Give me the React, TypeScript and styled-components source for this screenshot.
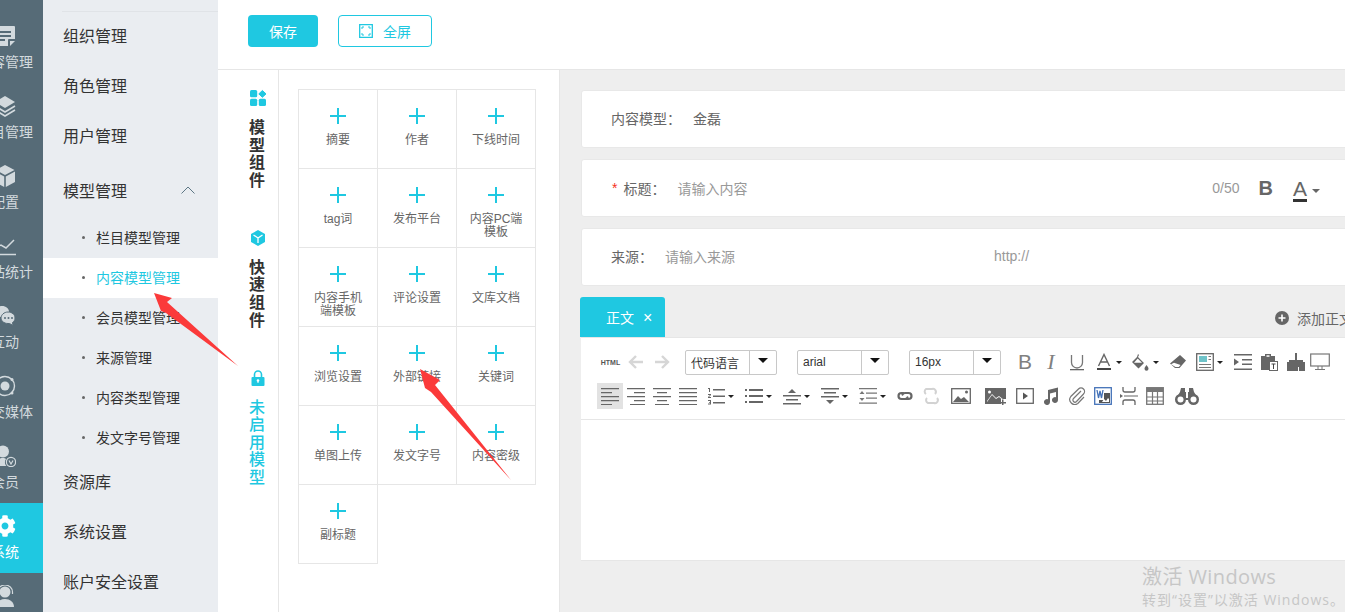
import React from 'react';
import styled, { createGlobalStyle } from 'styled-components';
import { FaCog } from 'react-icons/fa';

const CYAN = '#1fc8e1';
const LINE = '#e6e6e6';
const INK = '#666';

const Global = createGlobalStyle`
  html, body { margin: 0; padding: 0; background: #fff; overflow: hidden; }
  * { box-sizing: border-box; }
  body { font-family: "Liberation Sans", "Noto Sans CJK SC", sans-serif; color: #333; }
`;

const Page = styled.div`
  position: relative;
  display: flex;
  width: 100%;
  height: 612px;
  overflow: hidden;
`;

/* ---- icon rail ---- */
const Rail = styled.nav`
  flex: 0 0 43px;
  background: #566b77;
  overflow: hidden;
  padding-top: 13px;
`;
const RailItem = styled.div<{ $active?: boolean }>`
  width: 43px;
  height: 70px;
  background: ${p => (p.$active ? CYAN : 'transparent')};
  color: ${p => (p.$active ? '#fff' : '#d3dade')};
  overflow: hidden;
`;
const RailInner = styled.div`
  width: 86px;
  margin-left: -38px;
  display: flex;
  flex-direction: column;
  align-items: center;
  padding-top: 12px;
  svg { display: block; width: 22px; height: 22px; }
`;
const RailLabel = styled.span`
  font-size: 14px;
  line-height: 20px;
  margin-top: 5px;
  white-space: nowrap;
`;

/* ---- sub menu ---- */
const SubMenu = styled.aside`
  flex: 0 0 175px;
  background: #eaedf1;
  padding-top: 11px;
`;
const SubRule = styled.div`
  height: 1px;
  margin-left: 19px;
  background: #e0e3e7;
`;
const MenuItem = styled.div<{ $h?: number; $pad?: number }>`
  height: ${p => p.$h ?? 50}px;
  padding: 0 23px ${p => p.$pad ?? 4}px 20px;
  display: flex;
  align-items: center;
  justify-content: space-between;
  font-size: 16px;
  color: #333;
`;
const SubItem = styled.div<{ $active?: boolean }>`
  height: 40px;
  padding: 0 0 2px 39px;
  display: flex;
  align-items: center;
  font-size: 14px;
  position: relative;
  color: ${p => (p.$active ? CYAN : '#333')};
  background: ${p => (p.$active ? '#fff' : 'transparent')};
`;
const Dot = styled.i`
  width: 3px;
  height: 3px;
  background: #666;
  border-radius: 50%;
  margin-right: 11px;
`;

/* ---- main ---- */
const Main = styled.main`
  flex: 1;
  min-width: 0;
  display: flex;
  flex-direction: column;
`;
const TopBar = styled.header`
  flex: 0 0 70px;
  border-bottom: 1px solid ${LINE};
  padding: 15px 30px 0;
  display: flex;
  align-items: flex-start;
  gap: 20px;
`;
const SaveButton = styled.button`
  width: 70px;
  height: 32px;
  border: 0;
  border-radius: 4px;
  background: ${CYAN};
  color: #fff;
  font: inherit;
  font-size: 14px;
`;
const FullButton = styled.button`
  width: 94px;
  height: 32px;
  border: 1px solid ${CYAN};
  border-radius: 4px;
  background: #fff;
  color: ${CYAN};
  font: inherit;
  font-size: 14px;
  display: flex;
  align-items: center;
  padding: 0 0 0 20px;
  gap: 10px;
  svg { display: block; }
`;
const Body = styled.div`
  flex: 1;
  display: flex;
  min-height: 0;
`;
const SideTabs = styled.div`
  flex: 0 0 61px;
  border-right: 1px solid ${LINE};
  padding: 20px 0 0 31px;
  display: flex;
  flex-direction: column;
  gap: 40.400px;
`;
const SideTab = styled.div<{ $on?: boolean }>`
  width: 18px;
  display: flex;
  flex-direction: column;
  align-items: center;
  font-size: 16px;
  line-height: 17.6px;
  font-weight: ${p => (p.$on ? 500 : 700)};
  color: ${p => (p.$on ? CYAN : '#333')};
  svg { display: block; margin-bottom: 13px; overflow: visible; }
`;
const Panel = styled.section`
  flex: 0 0 281px;
  border-right: 1px solid ${LINE};
  padding: 19px 0 0 19px;
`;
const Grid = styled.div`
  display: grid;
  grid-template-columns: repeat(3, 79px);
  grid-auto-rows: 79px;
`;
const Cell = styled.div`
  width: 80px;
  height: 80px;
  border: 1px solid ${LINE};
  padding-top: 18px;
  display: flex;
  flex-direction: column;
  align-items: center;
  svg { display: block; }
`;
const CellLabel = styled.div`
  width: 56px;
  margin-top: 10px;
  font-size: 12px;
  line-height: 13px;
  color: ${INK};
  text-align: center;
`;
const Right = styled.section`
  flex: 1;
  min-width: 0;
  background: #eee;
  padding: 20px 0 0 21px;
  overflow: hidden;
`;
const Column = styled.div`
  width: 800px;
  display: flex;
  flex-direction: column;
  gap: 11px;
`;
const Card = styled.div<{ $lift?: boolean }>`
  height: 58px;
  background: #fff;
  border: 1px solid #e8e8e8;
  border-radius: 3px;
  padding: 0 60px ${p => (p.$lift ? 2 : 0)}px 29px;
  display: flex;
  align-items: center;
  font-size: 14px;
  color: ${INK};
`;
const Label = styled.span<{ $w: number }>`
  width: ${p => p.$w}px;
  flex: none;
`;
const Star = styled.span`
  color: #f5311d;
  margin: 0 6px 0 1px;
  font-size: 14px;
`;
const Hint = styled.span<{ $w?: number }>`
  color: #999;
  ${p => (p.$w ? `width: ${p.$w}px; flex: none;` : '')}
`;
const TitleTools = styled.div`
  margin-left: auto;
  display: flex;
  align-items: center;
`;
const Count = styled.span`
  color: #999;
  margin-right: 19px;
`;
const BoldB = styled.span`
  font-size: 20px;
  font-weight: 700;
  color: ${INK};
  margin-right: 20px;
`;
const UnderA = styled.span`
  font-size: 21px;
  line-height: 21px;
  color: ${INK};
  border-bottom: 3px solid #333;
  margin-right: 5px;
  margin-top: 3px;
`;
const Caret = styled.i<{ $c?: string; $s?: number; $drop?: number }>`
  width: 0;
  height: 0;
  flex: none;
  margin-top: ${p => p.$drop ?? 0}px;
  border-style: solid;
  border-width: ${p => p.$s ?? 3}px ${p => p.$s ?? 3}px 0;
  border-color: ${p => p.$c ?? '#333'} transparent transparent;
`;
const EditorBlock = styled.div`
  display: flex;
  flex-direction: column;
`;
const TabRow = styled.div`
  height: 40px;
  display: flex;
  justify-content: space-between;
  align-items: center;
  margin-left: -1px;
  padding-right: 28px;
`;
const ActiveTab = styled.div`
  width: 85px;
  height: 40px;
  background: ${CYAN};
  border-radius: 3px 3px 0 0;
  color: #fff;
  font-size: 14px;
  display: flex;
  align-items: center;
  padding-left: 26px;
  gap: 9px;
`;
const CloseMark = styled.span`
  font-size: 16px;
  line-height: 16px;
  margin-top: 1px;
`;
const AddTab = styled.div`
  display: flex;
  align-items: center;
  gap: 8px;
  font-size: 14px;
  color: ${INK};
  padding-top: 1px;
  svg { display: block; }
`;
const Editor = styled.div`
  background: #fff;
  border-top: 1px solid ${LINE};
  border-bottom: 1px solid ${LINE};
  height: 224px;
`;
const Toolbar = styled.div`
  height: 82px;
  border-bottom: 1px solid ${LINE};
  padding: 11px 0 0 16px;
`;
const ToolRow = styled.div`
  display: flex;
  align-items: center;
  height: 26px;
  & + & { margin-top: 8px; }
`;
const Tool = styled.span<{ $w?: number; $on?: boolean; $after?: number }>`
  flex: none;
  width: ${p => p.$w ?? 26}px;
  height: 26px;
  margin-right: ${p => p.$after ?? 0}px;
  display: flex;
  align-items: center;
  justify-content: center;
  gap: 3px;
  background: ${p => (p.$on ? '#e2e2e2' : 'transparent')};
  color: ${INK};
  svg { display: block; flex: none; }
`;
const HtmlTag = styled.span`
  font-size: 7px;
  font-weight: 700;
  color: #555;
  margin-left: 1px;
`;
const Select = styled.div<{ $after?: number }>`
  flex: none;
  width: 92px;
  height: 25px;
  margin-right: ${p => p.$after ?? 0}px;
  border: 1px solid #c8c8c8;
  border-radius: 2px;
  display: flex;
  align-items: center;
  font-size: 12px;
  color: #333;
`;
const SelectText = styled.span`
  flex: 1;
  padding-left: 5px;
`;
const SelectCaret = styled.span`
  flex: 0 0 27px;
  height: 100%;
  border-left: 1px solid #c8c8c8;
  display: flex;
  align-items: center;
  justify-content: center;
  padding-bottom: 3px;
`;
const Glyph = styled.span<{ $i?: boolean }>`
  font-size: ${p => (p.$i ? 22 : 21)}px;
  line-height: 20px;
  color: #808080;
  font-family: ${p => (p.$i ? '"Liberation Serif", serif' : 'inherit')};
  font-style: ${p => (p.$i ? 'italic' : 'normal')};
`;
const Overlay = styled.svg`
  position: absolute;
  left: 0;
  top: 0;
  pointer-events: none;
`;
const Watermark = styled.div`
  position: absolute;
  left: 1142px;
  top: 564px;
  color: #c6c6c6;
  white-space: nowrap;
  font-family: "Open Sans", "Noto Sans CJK SC", sans-serif;
`;
const WmTitle = styled.div`
  font-size: 20px;
  line-height: 26px;
  letter-spacing: 0.4px;
`;
const WmSub = styled.div`
  font-size: 14px;
  line-height: 20px;
  letter-spacing: 1px;
`;

/* ---- drawings ---- */
const RailIcons: Record<string, React.ReactNode> = {
  doc: <svg viewBox="0 0 22 22"><path fill="currentColor" fillRule="evenodd" d="M2 1h18a1 1 0 0 1 1 1v12h-6a1 1 0 0 0-1 1v6H2a1 1 0 0 1-1-1V2a1 1 0 0 1 1-1zM5 6v2h12V6zM5 10v2h12v-2zM5 14v2h6v-2z" /><path fill="currentColor" d="M16 16h5l-5 5z" /></svg>,
  layers: <svg viewBox="0 0 22 22"><path fill="currentColor" d="M11 1l10 6-10 6L1 7z" /><path fill="none" stroke="currentColor" strokeWidth="1.6" d="M1 11l10 6 10-6M1 15l10 6 10-6" /></svg>,
  cube: <svg viewBox="0 0 22 22"><path fill="currentColor" d="M11 0l9.500 5L11 10 1.500 5zM1 6.500l9.200 5V22L1 17zM21 6.500l-9.200 5V22L21 17z" /></svg>,
  chart: <svg viewBox="0 0 22 22"><path fill="none" stroke="currentColor" strokeWidth="1.5" d="M1 13l6-3 5 3 8-8" /><path fill="none" stroke="currentColor" strokeWidth="1.5" d="M0 19.500h22" /></svg>,
  chat: <svg viewBox="0 0 22 22"><path fill="currentColor" d="M8 1c4 0 7 2.500 7 5.500S12 12 8 12H6l-3 2 .5-3C1.500 10 1 8.500 1 6.500 1 3.500 4 1 8 1z" /><path fill="currentColor" stroke="#566b77" d="M14 7c4 0 7 2.500 7 6 0 2-1 3.500-2.500 4.500l.5 3-3.500-2H14c-4 0-7-2.500-7-5.500S10 7 14 7z" /><circle cx="11" cy="13" r="1" fill="#566b77" /><circle cx="14.500" cy="13" r="1" fill="#566b77" /><circle cx="18" cy="13" r="1" fill="#566b77" /></svg>,
  ring: <svg viewBox="0 0 22 22"><circle cx="11" cy="11" r="9.500" fill="none" stroke="currentColor" strokeWidth="1.4" /><circle cx="11" cy="11" r="4.500" fill="currentColor" /><circle cx="18" cy="4.500" r="1.500" fill="currentColor" /><circle cx="18" cy="18" r="1.500" fill="currentColor" /></svg>,
  member: <svg viewBox="0 0 22 22"><circle cx="9" cy="6.500" r="6" fill="currentColor" /><path fill="currentColor" d="M1 21c0-5 3-8 8-8 1.500 0 2 .3 3 1-1.500 2-1.500 5 .5 7z" /><circle cx="17" cy="17" r="4.600" fill="none" stroke="currentColor" strokeWidth="1.200" /><path fill="none" stroke="currentColor" strokeWidth="1.200" d="M15 15.500l2 3.500 2-3.500" /></svg>,
  head: <svg viewBox="0 0 22 22"><circle cx="11" cy="7" r="5.500" fill="currentColor" /><path fill="none" stroke="currentColor" strokeWidth="1.200" d="M3.500 9V7a7.500 7 0 0 1 15 0v2" /><path fill="currentColor" d="M2 22c0-5 4-8 9-8s9 3 9 8z" /></svg>,
};

const Plus = () => (
  <svg width="16" height="16" viewBox="0 0 16 16"><path fill={CYAN} d="M0 7h16v2H0zM7 0h2v16H7z" /></svg>
);

const S = (p: { w?: number; children: React.ReactNode }) => (
  <svg width={p.w ?? 18} height="18" viewBox={`0 0 ${p.w ?? 18} 18`}>{p.children}</svg>
);
const Lines = ({ rows }: { rows: [number, number, number][] }) => (
  <S><path fill="#666" d={rows.map(([y, a, b]) => `M${a} ${y}h${b - a}v1.200h-${b - a}z`).join('')} /></S>
);
const TBCaret = () => <Caret $c="#222" />;

const cellNames = ['摘要', '作者', '下线时间', 'tag词', '发布平台', '内容PC端模板', '内容手机端模板', '评论设置', '文库文档', '浏览设置', '外部链接', '关键词', '单图上传', '发文字号', '内容密级', '副标题'];
const rail = [
  ['doc', '内容管理'], ['layers', '栏目管理'], ['cube', '配置'], ['chart', '网站统计'],
  ['chat', '互动'], ['ring', '社交媒体'], ['member', '会员'], ['gear', '系统'], ['head', '客服'],
];
const subs = ['栏目模型管理', '内容模型管理', '会员模型管理', '来源管理', '内容类型管理', '发文字号管理'];

export default function App() {
  return (
    <Page>
      <Global />
      <Rail>
        {rail.map(([k, t]) => (
          <RailItem key={k} $active={k === 'gear'}>
            <RailInner>
              {k === 'gear' ? <FaCog /> : RailIcons[k]}
              <RailLabel>{t}</RailLabel>
            </RailInner>
          </RailItem>
        ))}
      </Rail>
      <SubMenu>
        <SubRule />
        <MenuItem>组织管理</MenuItem>
        <MenuItem>角色管理</MenuItem>
        <MenuItem>用户管理</MenuItem>
        <MenuItem $h={56} $pad={0}>
          模型管理
          <svg width="14" height="8" viewBox="0 0 14 8"><path fill="none" stroke="#5d7785" d="M.5 7.500L7 1l6.500 6.500" /></svg>
        </MenuItem>
        {subs.map(s => (
          <SubItem key={s} $active={s === '内容模型管理'}><Dot />{s}</SubItem>
        ))}
        <MenuItem>资源库</MenuItem>
        <MenuItem>系统设置</MenuItem>
        <MenuItem>账户安全设置</MenuItem>
      </SubMenu>
      <Main>
        <TopBar>
          <SaveButton>保存</SaveButton>
          <FullButton>
            <svg width="14" height="14" viewBox="0 0 14 14"><path fill="none" stroke={CYAN} strokeWidth="1.300" d="M.7.700h12.600v12.600H.7z" /><path fill="none" stroke={CYAN} d="M3 5V3h2M9 3h2v2M11 9v2H9M5 11H3V9" /></svg>
            全屏
          </FullButton>
        </TopBar>
        <Body>
          <SideTabs>
            <SideTab>
              <svg width="16" height="16" viewBox="0 0 16 16"><rect x="0" y="0" width="7.200" height="7.200" rx="1.500" fill={CYAN} /><rect x="0" y="8.800" width="7.200" height="7.200" rx="1.500" fill={CYAN} /><rect x="8.800" y="8.800" width="7.200" height="7.200" rx="1.500" fill={CYAN} /><path fill={CYAN} stroke={CYAN} strokeLinejoin="round" d="M12.400 .5L16 3.900 12.400 7.300 8.800 3.900z" /></svg>
              模型组件
            </SideTab>
            <SideTab>
              <svg width="16" height="16" viewBox="0 0 16 16"><path fill={CYAN} d="M8 0l7 4v8l-7 4-7-4V4z" /><path fill="none" stroke="#fff" strokeWidth="1.300" d="M3.500 5L8 8l4.500-3M8 8v5" /></svg>
              快速组件
            </SideTab>
            <SideTab $on>
              <svg width="16" height="16" viewBox="0 0 16 16"><path fill="none" stroke={CYAN} strokeWidth="1.600" d="M4.500 7V4.500a3.500 3.500 0 0 1 7 0V7" /><rect x="1.500" y="7" width="13" height="9" rx="1" fill={CYAN} /><circle cx="8" cy="10.500" r="1.300" fill="#fff" /><path stroke="#fff" strokeWidth="1" d="M8 11v2" /></svg>
              未启用模型
            </SideTab>
          </SideTabs>
          <Panel>
            <Grid>
              {cellNames.map(n => (
                <Cell key={n}>
                  <Plus />
                  <CellLabel>{n}</CellLabel>
                </Cell>
              ))}
            </Grid>
          </Panel>
          <Right>
            <Column>
              <Card $lift>
                <Label $w={82}>内容模型：</Label>
                <span>金磊</span>
              </Card>
              <Card>
                <Star>*</Star>
                <Label $w={54}>标题：</Label>
                <Hint>请输入内容</Hint>
                <TitleTools>
                  <Count>0/50</Count>
                  <BoldB>B</BoldB>
                  <UnderA>A</UnderA>
                  <Caret $c="#666" $s={4} $drop={6} />
                </TitleTools>
              </Card>
              <Card $lift>
                <Label $w={54}>来源：</Label>
                <Hint $w={329}>请输入来源</Hint>
                <Hint>http://</Hint>
              </Card>
              <EditorBlock>
                <TabRow>
                  <ActiveTab>正文<CloseMark>×</CloseMark></ActiveTab>
                  <AddTab>
                    <svg width="14" height="14" viewBox="0 0 14 14"><circle cx="7" cy="7" r="7" fill="#666" /><path fill="#fff" d="M3.500 6.200h7v1.600h-7zM6.200 3.500h1.600v7H6.200z" /></svg>
                    添加正文
                  </AddTab>
                </TabRow>
                <Editor>
                  <Toolbar>
                    <ToolRow>
                      <Tool><HtmlTag>HTML</HtmlTag></Tool>
                      <Tool><S><path fill="none" stroke="#d6d6d6" strokeWidth="2.400" d="M16 9H3M9 3L3 9l6 6" /></S></Tool>
                      <Tool $after={10}><S><path fill="none" stroke="#d6d6d6" strokeWidth="2.400" d="M2 9h13M9 3l6 6-6 6" /></S></Tool>
                      <Select $after={20}><SelectText>代码语言</SelectText><SelectCaret><Caret $c="#111" $s={5} /></SelectCaret></Select>
                      <Select $after={20}><SelectText>arial</SelectText><SelectCaret><Caret $c="#111" $s={5} /></SelectCaret></Select>
                      <Select $after={11}><SelectText>16px</SelectText><SelectCaret><Caret $c="#111" $s={5} /></SelectCaret></Select>
                      <Tool><Glyph>B</Glyph></Tool>
                      <Tool><Glyph $i>I</Glyph></Tool>
                      <Tool><S><path fill="none" stroke="#777" strokeWidth="1.300" d="M3.500 2v7.500a5.500 5.500 0 0 0 11 0V2" /><path fill="#666" d="M2 16h14v1.300H2z" /></S></Tool>
                      <Tool $w={36}>
                        <S><path fill="none" stroke="#666" strokeWidth="1.400" d="M3.500 13L9 1.500 14.500 13M5.500 9h7" /><path fill="#444" d="M2 15h14v2H2z" /></S>
                        <TBCaret />
                      </Tool>
                      <Tool $w={38} $after={1}>
                        <S w={19}><path fill="#666" d="M7 1l1 1-1 2 6 6-5.500 5.500L1 9l5-5z" /><path fill="#fff" d="M6.700 5.500L11 9.700H3z" /><path fill="#666" d="M15.500 12c1 1.500 2 2.500 2 3.700a2 2 0 0 1-4 0c0-1.200 1-2.200 2-3.700z" /></S>
                        <TBCaret />
                      </Tool>
                      <Tool><S><path fill="#666" d="M11 2l6 5.500-6.500 7.500H6L1 10.500zM5 9.800L2 11.200 6.500 14h3.300l1.800-2z" /></S></Tool>
                      <Tool $w={37} $after={2}>
                        <S><rect x=".7" y=".7" width="16.600" height="16.600" fill="none" stroke="#666" strokeWidth="1.300" /><path fill="#6fc3c9" d="M3 3h8v6H3z" /><path fill="#777" d="M12.500 3H15v1h-2.500zM12.500 6H15v1h-2.500zM3 11h12v1H3zM3 14h12v1H3z" /></S>
                        <TBCaret />
                      </Tool>
                      <Tool><S><path fill="#666" d="M0 1h18v1.600H0zM8 6h10v1.600H8zM8 10.500h10v1.600H8zM0 15.500h18v1.600H0zM0 5.500L5 9l-5 3.500z" /></S></Tool>
                      <Tool $after={1}><S><path fill="#666" d="M1 3h4V1h6v2h4v5H9v9H1z" /><path fill="#fff" d="M6.500 2.300h3v1.500h-3z" /><rect x="9.500" y="8.500" width="8" height="9" fill="#fff" stroke="#666" /><path stroke="#444" d="M11.500 11h4M13.500 11v5" /></S></Tool>
                      <Tool><S><path fill="#666" d="M8 0h2v7h6v2h2v9H12v-4h-1v4H0V9h2V7h6z" /></S></Tool>
                      <Tool $w={22}><S w={20}><rect x=".7" y="1" width="18.600" height="12" fill="none" stroke="#777" strokeWidth="1.200" /><path fill="none" stroke="#777" d="M8 13v3M12 13v3M5 16.500h10" /></S></Tool>
                    </ToolRow>
                    <ToolRow>
                      <Tool $on><Lines rows={[[1, 0, 18], [5, 0, 11], [9, 0, 18], [13, 0, 18], [17, 0, 11]]} /></Tool>
                      <Tool><Lines rows={[[1, 0, 18], [5, 7, 18], [9, 0, 18], [13, 7, 18], [17, 3, 18]]} /></Tool>
                      <Tool><Lines rows={[[1, 0, 18], [5, 4, 14], [9, 0, 18], [13, 4, 14], [17, 2, 16]]} /></Tool>
                      <Tool><Lines rows={[[1, 0, 18], [5, 0, 18], [9, 0, 18], [13, 0, 18], [17, 0, 18]]} /></Tool>
                      <Tool $w={38}>
                        <S><path fill="#666" d="M1 1h2v4H2V2H1zM1 7h3v1L2 10h2v1H1v-1l2-2H1zM1 13h3v4.500H1v-1h2v-.7H2v-.8h1v-.9H1zM6 2h12v1.500H6zM6 8.500h12V10H6zM6 15h12v1.500H6z" /></S>
                        <TBCaret />
                      </Tool>
                      <Tool $w={38}>
                        <S><path fill="#666" d="M0 2h2v2H0zM0 8h2v2H0zM0 14h2v2H0zM4 2h14v2H4zM4 8h14v2H4zM4 14h14v2H4z" /></S>
                        <TBCaret />
                      </Tool>
                      <Tool $w={38}>
                        <S><path fill="#666" d="M9 2l4 4H5zM0 8h18v1.500H0zM3 12h12v1.500H3zM0 16h18v1.500H0z" /></S>
                        <TBCaret />
                      </Tool>
                      <Tool $w={38}>
                        <S><path fill="#666" d="M0 1h18v1.500H0zM3 5h12v1.500H3zM0 9h18v1.500H0zM5 13h8l-4 4z" /></S>
                        <TBCaret />
                      </Tool>
                      <Tool $w={39}>
                        <S><path fill="#777" d="M0 1h18v1.300H0zM7 5.500h11v1.300H7zM7 10.500h11v1.300H7zM0 15.500h18v1.300H0zM3 4l2.500 3h-5zM3 14l-2.500-3h5z" /></S>
                        <TBCaret />
                      </Tool>
                      <Tool><S><path fill="none" stroke="#666" strokeWidth="2.200" strokeLinecap="round" d="M7.500 6H5.500a3 3 0 0 0 0 6h3.500a3 3 0 0 0 2.500-1.500M10.500 12h2a3 3 0 0 0 0-6H9a3 3 0 0 0-2.500 1.500" /></S></Tool>
                      <Tool $after={4}><S><path fill="none" stroke="#d2d2d2" strokeWidth="2" d="M4 7a3 3 0 0 1 0-5h6a3 3 0 0 1 3 5M5 11a3 3 0 0 0 1 5h6a3 3 0 0 0 3-5" /></S></Tool>
                      <Tool $after={8} $w={26}><S w={20}><rect x=".7" y="1.700" width="18.600" height="14.600" fill="none" stroke="#666" strokeWidth="1.300" /><path fill="#666" d="M2 15l5-6 3 3 3-2 5 5z" /><circle cx="15.500" cy="5" r="1.500" fill="#666" /></S></Tool>
                      <Tool $after={4}><S w={21}><path fill="#666" d="M0 1h21v11h-5v5H0z" /><path fill="#fff" d="M2 15l5-7 4 4 3-2 5 4v-1l-5-4-3 2-4-4-5 7zM4.500 3.500a1.500 1.500 0 1 0 0 3 1.500 1.500 0 0 0 0-3z" /><path fill="#666" d="M17 12.500h1.500V15H21v1.500h-2.500V18H17v-1.500h-3V15h3z" /></S></Tool>
                      <Tool><S><rect x=".7" y="1.700" width="16.600" height="14.600" fill="none" stroke="#666" strokeWidth="1.300" /><path fill="#555" d="M7 5.500L12 9l-5 3.500z" /></S></Tool>
                      <Tool><S><path fill="#666" d="M6 3l10-2.500V13a3 3 0 1 1-2-2.800V5L8 6.500V15a3 3 0 1 1-2-2.800z" /></S></Tool>
                      <Tool><S><path fill="none" stroke="#777" strokeWidth="1.200" d="M13 4L5.500 11.500a2 2 0 0 0 3 3L15.500 7a3.500 3.500 0 0 0-5-5L2.800 9.500a5 5 0 0 0 7 7L16 10" /></S></Tool>
                      <Tool><S><rect x=".7" y=".7" width="16.600" height="16.600" fill="none" stroke="#4472b8" strokeWidth="1.300" /><path fill="none" stroke="#4472b8" strokeWidth="1.300" d="M3 3l1.500 8L6 4l1.500 7L9 3" /><path fill="#555" d="M10 6h6v10H5v-3h5z" /><path fill="#fff" d="M8 15l2-3 2 2 2-3 1 1v3z" /></S></Tool>
                      <Tool><S><path fill="none" stroke="#666" strokeWidth="1.300" d="M3 0v3a2 2 0 0 0 2 2h8a2 2 0 0 0 2-2V0M3 18v-3a2 2 0 0 1 2-2h8a2 2 0 0 1 2 2v3" /><path fill="#666" d="M0 7l3 2-3 2zM4 8.400h14v1.200H4z" /></S></Tool>
                      <Tool $after={4}><S><rect x=".7" y=".7" width="16.600" height="16.600" fill="none" stroke="#777" strokeWidth="1.300" /><path fill="#777" d="M1 1h16v4H1z" /><path stroke="#777" strokeWidth="1.200" d="M1 10h16M1 14h16M6.500 5v12M11.500 5v12" /></S></Tool>
                      <Tool $w={30}><S w={26}><path fill="#666" d="M7 1h4v4h4V1h4l1 4 5 8H1l5-8z" /><circle cx="6.500" cy="12.500" r="5.500" fill="#666" /><circle cx="19.500" cy="12.500" r="5.500" fill="#666" /><circle cx="6.500" cy="12.500" r="3" fill="#fff" /><circle cx="19.500" cy="12.500" r="3" fill="#fff" /><path fill="#fff" d="M12 5h2v6h-2z" /></S></Tool>
                    </ToolRow>
                  </Toolbar>
                </Editor>
              </EditorBlock>
            </Column>
          </Right>
        </Body>
      </Main>
      <Overlay width="1345" height="612" viewBox="0 0 1345 612">
        <path fill="#fb3a3a" d="M154 293L172 298 167 302 238 366 166 313 161 311z" />
        <path fill="#fb3a3a" d="M420 369L440 380 435 385 511 480 431 392 425 388z" />
      </Overlay>
      <Watermark>
        <WmTitle>激活 Windows</WmTitle>
        <WmSub>转到“设置”以激活 Windows。</WmSub>
      </Watermark>
    </Page>
  );
}
